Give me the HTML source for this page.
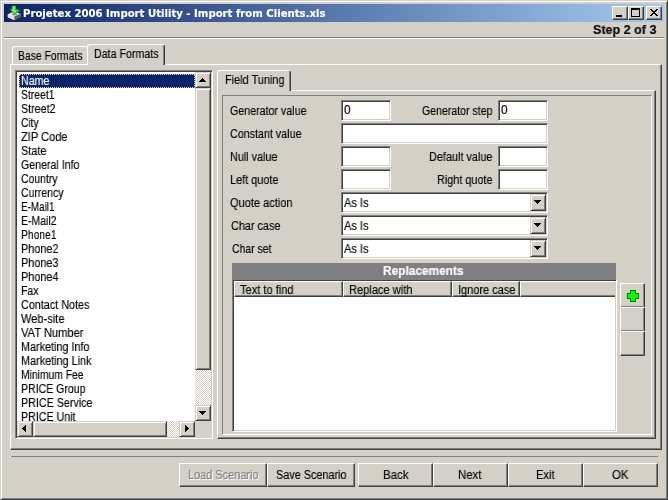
<!DOCTYPE html>
<html><head><meta charset="utf-8"><title>Projetex 2006 Import Utility</title>
<style>
*{box-sizing:border-box;margin:0;padding:0}
html,body{width:668px;height:500px;overflow:hidden;background:#d4d0c8}
body{font-family:"Liberation Sans",sans-serif;font-size:12px;color:#000;position:relative}
.a{position:absolute}
.t{position:absolute;white-space:nowrap;height:14px;line-height:14px;transform-origin:0 0;will-change:transform;-webkit-text-stroke:0.15px currentColor}
.b{font-weight:bold}
.w{color:#fff}
.sel{color:#fff}
.dis{color:#808080;text-shadow:1px 1px 0 #fff}
.ttl{color:#fff;font-weight:bold;font-size:11px;font-family:"DejaVu Sans Condensed","DejaVu Sans","Liberation Sans",sans-serif}
#win{left:0;top:0;width:668px;height:500px;border:1px solid;border-color:#d4d0c8 #404040 #404040 #d4d0c8;box-shadow:inset 1px 1px 0 #fff,inset -1px -1px 0 #808080}
#title{left:4px;top:4px;width:660px;height:18px;background:linear-gradient(to right,#0a246a,#a6caf0)}
.btn{position:absolute;background:#d4d0c8;border:1px solid;border-color:#fff #404040 #404040 #fff;box-shadow:inset -1px -1px 0 #808080}
.sb{position:absolute;background:#d4d0c8;border:1px solid;border-color:#d4d0c8 #404040 #404040 #d4d0c8;box-shadow:inset 1px 1px 0 #fff,inset -1px -1px 0 #808080}
.sunk{position:absolute;background:#fff;border:1px solid;border-color:#808080 #fff #fff #808080;box-shadow:inset 1px 1px 0 #404040,inset -1px -1px 0 #d4d0c8}
.page{position:absolute;border:1px solid;border-color:#fff #404040 #404040 #fff;box-shadow:inset -1px -1px 0 #808080}
.tab{position:absolute;background:#d4d0c8;border:1px solid;border-color:#fff #404040 #d4d0c8 #fff;border-bottom:0;box-shadow:inset -1px 0 0 #808080;border-radius:3px 3px 0 0}
.hl{position:absolute;height:2px;border-top:1px solid #808080;border-bottom:1px solid #fff}
.bev{position:absolute;border:1px solid;border-color:#808080 #fff #fff #808080}
.hc{position:absolute;top:281px;height:16px;background:#d4d0c8;border:1px solid;border-color:#fff #404040 #404040 #fff;box-shadow:inset -1px -1px 0 #808080}
.trk{position:absolute}
svg{position:absolute;overflow:visible}
</style></head><body>
<div id="win" class="a"></div>
<div id="title" class="a"></div>
<svg style="left:6px;top:5px" width="16" height="16" viewBox="0 0 16 16">
<path d="M1.8 9.3 L8 6.6 L14.4 8.8 L14.4 11.8 L8.2 14.9 L1.8 12.3 Z" fill="#f4f4f4"/>
<path d="M8.2 11.6 L14.4 8.8 L14.4 11.8 L8.2 14.9 Z" fill="#5e5c58"/>
<path d="M1.8 9.3 L8.2 11.6 L8.2 14.9 L1.8 12.3 Z" fill="#dedede"/>
<path d="M5 9.2 L8 8 L11.6 9.2 L8.4 10.7 Z" fill="#8f8f8f"/>
<path d="M5.9 0.8 L10 0.8 L10.1 4.3 L12.6 4.6 L13.4 6 L8.3 9.9 L3.6 3.6 L5.9 3.8 Z" fill="#27b927"/>
<path d="M6.6 1.2 L9 1.2 L9 5 L11.4 5.6 L8.3 8.2 L5.2 4.4 L6.6 4.6 Z" fill="#74ee6e"/>
<path d="M12.2 5 L13.4 5.2 L13.4 6.4 L12.2 6.4 Z" fill="#10e010"/>
</svg>
<div class="btn" style="left:612px;top:6px;width:16px;height:14px"></div>
<div class="btn" style="left:628px;top:6px;width:16px;height:14px"></div>
<div class="btn" style="left:646px;top:6px;width:16px;height:14px"></div>
<div class="a" style="left:616px;top:15px;width:6px;height:2px;background:#000"></div>
<div class="a" style="left:631px;top:8px;width:9px;height:9px;border:1px solid #000;border-top-width:2px"></div>
<svg style="left:650px;top:9px" width="8" height="7" viewBox="0 0 8 7" shape-rendering="crispEdges"><path d="M0 0h2v1h-2zM6 0h2v1h-2zM1 1h2v1h-2zM5 1h2v1h-2zM2 2h4v1h-4zM3 3h2v1h-2zM2 4h4v1h-4zM1 5h2v1h-2zM5 5h2v1h-2zM0 6h2v1h-2zM6 6h2v1h-2z" fill="#000"/></svg>
<div class="hl" style="left:4px;top:37px;width:660px"></div>
<div class="a" style="left:10px;top:456px;width:648px;height:1px;background:#808080;border-left:1px solid #fff"></div>
<div class="page" style="left:10px;top:64px;width:652px;height:386px"></div>
<div class="tab" style="left:12px;top:46px;width:76px;height:18px;box-shadow:none;border-right-color:#d4d0c8"></div>
<div class="tab" style="left:87px;top:44px;width:78px;height:21px"></div>
<div class="sunk" style="left:15px;top:70px;width:198px;height:369px"></div>
<div class="a" style="left:19px;top:74px;width:176px;height:14px;background:#0a246a;border:1px dotted #e8d48c"></div>
<div class="page" style="left:217px;top:90px;width:439px;height:349px"></div>
<div class="tab" style="left:217px;top:70px;width:74px;height:21px"></div>
<div class="bev" style="left:222px;top:95px;width:430px;height:340px"></div>
<div class="sunk" style="left:341px;top:100px;width:50px;height:21px"></div>
<div class="sunk" style="left:498px;top:100px;width:50px;height:21px"></div>
<div class="sunk" style="left:341px;top:123px;width:207px;height:21px"></div>
<div class="sunk" style="left:341px;top:146px;width:50px;height:21px"></div>
<div class="sunk" style="left:498px;top:146px;width:50px;height:21px"></div>
<div class="sunk" style="left:341px;top:169px;width:50px;height:21px"></div>
<div class="sunk" style="left:498px;top:169px;width:50px;height:21px"></div>
<div class="sunk" style="left:341px;top:192px;width:207px;height:21px"></div>
<div class="sunk" style="left:341px;top:215px;width:207px;height:21px"></div>
<div class="sunk" style="left:341px;top:238px;width:207px;height:21px"></div>
<div class="sb" style="left:530px;top:194px;width:16px;height:17px"></div>
<svg style="left:534px;top:200px" width="7" height="4" viewBox="0 0 7 4" shape-rendering="crispEdges"><path d="M0 0h7v1h-7zM1 1h5v1h-5zM2 2h3v1h-3zM3 3h1v1h-1z"/></svg>
<div class="sb" style="left:530px;top:217px;width:16px;height:17px"></div>
<svg style="left:534px;top:223px" width="7" height="4" viewBox="0 0 7 4" shape-rendering="crispEdges"><path d="M0 0h7v1h-7zM1 1h5v1h-5zM2 2h3v1h-3zM3 3h1v1h-1z"/></svg>
<div class="sb" style="left:530px;top:240px;width:16px;height:17px"></div>
<svg style="left:534px;top:246px" width="7" height="4" viewBox="0 0 7 4" shape-rendering="crispEdges"><path d="M0 0h7v1h-7zM1 1h5v1h-5zM2 2h3v1h-3zM3 3h1v1h-1z"/></svg>
<div class="a" style="left:232px;top:263px;width:384px;height:17px;background:#808080"></div>
<div class="sunk" style="left:232px;top:279px;width:385px;height:153px"></div>
<div class="hc" style="left:234px;width:109px"></div>
<div class="hc" style="left:343px;width:109px"></div>
<div class="hc" style="left:452px;width:68px"></div>
<div class="hc" style="left:520px;width:95px;border-right:0;box-shadow:inset 0 -1px 0 #808080"></div>
<div class="btn" style="left:620px;top:283px;width:25px;height:25px"></div>
<div class="btn" style="left:620px;top:307px;width:25px;height:25px"></div>
<div class="btn" style="left:620px;top:331px;width:25px;height:25px"></div>
<svg style="left:627px;top:290px" width="12" height="12" viewBox="0 0 12 12" shape-rendering="crispEdges"><path d="M3 0h6v3h3v6h-3v3h-6v-3h-3v-6h3z" fill="#008000"/><path d="M4 1h4v3h3v4h-3v3h-4v-3h-3v-4h3z" fill="#00ff00"/></svg>
<svg style="left:0;top:0" width="0" height="0"><defs><pattern id="ck" width="2" height="2" patternUnits="userSpaceOnUse"><rect width="2" height="2" fill="#d4d0c8"/><rect width="1" height="1" fill="#fff"/><rect x="1" y="1" width="1" height="1" fill="#fff"/></pattern></defs></svg>
<svg style="left:195px;top:370px" width="16" height="35" shape-rendering="crispEdges"><rect width="16" height="35" fill="url(#ck)"/></svg>
<svg style="left:167px;top:421px" width="12" height="16" shape-rendering="crispEdges"><rect width="12" height="16" fill="url(#ck)"/></svg>
<div class="a" style="left:195px;top:421px;width:16px;height:16px;background:#d4d0c8"></div>
<div class="sb" style="left:195px;top:72px;width:16px;height:16px"></div>
<div class="sb" style="left:195px;top:88px;width:16px;height:282px"></div>
<div class="sb" style="left:195px;top:405px;width:16px;height:16px"></div>
<div class="sb" style="left:17px;top:421px;width:16px;height:16px"></div>
<div class="sb" style="left:33px;top:421px;width:134px;height:16px"></div>
<div class="sb" style="left:179px;top:421px;width:16px;height:16px"></div>
<svg style="left:199px;top:78px" width="7" height="4" viewBox="0 0 7 4" shape-rendering="crispEdges"><path d="M3 0h1v1h-1zM2 1h3v1h-3zM1 2h5v1h-5zM0 3h7v1h-7z"/></svg>
<svg style="left:199px;top:411px" width="7" height="4" viewBox="0 0 7 4" shape-rendering="crispEdges"><path d="M0 0h7v1h-7zM1 1h5v1h-5zM2 2h3v1h-3zM3 3h1v1h-1z"/></svg>
<svg style="left:22px;top:425px" width="4" height="7" viewBox="0 0 4 7" shape-rendering="crispEdges"><path d="M3 0h1v7h-1zM2 1h1v5h-1zM1 2h1v3h-1zM0 3h1v1h-1z"/></svg>
<svg style="left:185px;top:425px" width="4" height="7" viewBox="0 0 4 7" shape-rendering="crispEdges"><path d="M0 0h1v7h-1zM1 1h1v5h-1zM2 2h1v3h-1zM3 3h1v1h-1z"/></svg>
<div class="btn" style="left:179px;top:463px;width:88px;height:24px"></div>
<div class="btn" style="left:267px;top:463px;width:88px;height:24px"></div>
<div class="btn" style="left:358px;top:463px;width:75px;height:24px"></div>
<div class="btn" style="left:433px;top:463px;width:75px;height:24px"></div>
<div class="btn" style="left:508px;top:463px;width:75px;height:24px"></div>
<div class="btn" style="left:583px;top:463px;width:75px;height:24px"></div>
<div class="t sel" style="left:21px;top:74px;transform:scaleX(0.8902);">Name</div>
<div class="t" style="left:21px;top:88px;transform:scaleX(0.8656);">Street1</div>
<div class="t" style="left:21px;top:102px;transform:scaleX(0.8914);">Street2</div>
<div class="t" style="left:21px;top:116px;transform:scaleX(0.8466);">City</div>
<div class="t" style="left:21px;top:130px;transform:scaleX(0.9211);">ZIP Code</div>
<div class="t" style="left:21px;top:144px;transform:scaleX(0.9097);">State</div>
<div class="t" style="left:21px;top:158px;transform:scaleX(0.8857);">General Info</div>
<div class="t" style="left:21px;top:172px;transform:scaleX(0.8684);">Country</div>
<div class="t" style="left:21px;top:186px;transform:scaleX(0.8729);">Currency</div>
<div class="t" style="left:21px;top:200px;transform:scaleX(0.8233);">E-Mail1</div>
<div class="t" style="left:21px;top:214px;transform:scaleX(0.8725);">E-Mail2</div>
<div class="t" style="left:21px;top:228px;transform:scaleX(0.8580);">Phone1</div>
<div class="t" style="left:21px;top:242px;transform:scaleX(0.9063);">Phone2</div>
<div class="t" style="left:21px;top:256px;transform:scaleX(0.9063);">Phone3</div>
<div class="t" style="left:21px;top:270px;transform:scaleX(0.9063);">Phone4</div>
<div class="t" style="left:21px;top:284px;transform:scaleX(0.8743);">Fax</div>
<div class="t" style="left:21px;top:298px;transform:scaleX(0.9008);">Contact Notes</div>
<div class="t" style="left:21px;top:312px;transform:scaleX(0.9228);">Web-site</div>
<div class="t" style="left:21px;top:326px;transform:scaleX(0.9279);">VAT Number</div>
<div class="t" style="left:21px;top:340px;transform:scaleX(0.9008);">Marketing Info</div>
<div class="t" style="left:21px;top:354px;transform:scaleX(0.9033);">Marketing Link</div>
<div class="t" style="left:21px;top:368px;transform:scaleX(0.8598);">Minimum Fee</div>
<div class="t" style="left:21px;top:382px;transform:scaleX(0.8792);">PRICE Group</div>
<div class="t" style="left:21px;top:396px;transform:scaleX(0.8934);">PRICE Service</div>
<div class="t" style="left:21px;top:410px;transform:scaleX(0.8882);">PRICE Unit</div>
<div class="t" style="left:18px;top:49px;transform:scaleX(0.8634);">Base Formats</div>
<div class="t" style="left:94px;top:47px;transform:scaleX(0.8874);">Data Formats</div>
<div class="t" style="left:225px;top:73px;transform:scaleX(0.9101);">Field Tuning</div>
<div class="t" style="left:230px;top:104px;transform:scaleX(0.8889);">Generator value</div>
<div class="t" style="left:230px;top:127px;transform:scaleX(0.8931);">Constant value</div>
<div class="t" style="left:230px;top:150px;transform:scaleX(0.9013);">Null value</div>
<div class="t" style="left:230px;top:173px;transform:scaleX(0.9084);">Left quote</div>
<div class="t" style="left:230px;top:196px;transform:scaleX(0.9185);">Quote action</div>
<div class="t" style="left:231px;top:219px;transform:scaleX(0.9049);">Char case</div>
<div class="t" style="left:232px;top:242px;transform:scaleX(0.8708);">Char set</div>
<div class="t" style="left:422px;top:104px;transform:scaleX(0.8807);">Generator step</div>
<div class="t" style="left:429px;top:150px;transform:scaleX(0.9065);">Default value</div>
<div class="t" style="left:437px;top:173px;transform:scaleX(0.9040);">Right quote</div>
<div class="t" style="left:344px;top:103px;transform:scaleX(0.9720);">0</div>
<div class="t" style="left:501px;top:103px;transform:scaleX(0.9720);">0</div>
<div class="t" style="left:344px;top:196px;transform:scaleX(0.9186);">As Is</div>
<div class="t" style="left:344px;top:219px;transform:scaleX(0.9186);">As Is</div>
<div class="t" style="left:344px;top:242px;transform:scaleX(0.9186);">As Is</div>
<div class="t" style="left:240px;top:283px;transform:scaleX(0.9219);">Text to find</div>
<div class="t" style="left:349px;top:283px;transform:scaleX(0.9243);">Replace with</div>
<div class="t" style="left:458px;top:283px;transform:scaleX(0.9168);">Ignore case</div>
<div class="t dis" style="left:188px;top:468px;transform:scaleX(0.9110);">Load Scenario</div>
<div class="t" style="left:276px;top:468px;transform:scaleX(0.9033);">Save Scenario</div>
<div class="t" style="left:383px;top:468px;transform:scaleX(0.9555);">Back</div>
<div class="t" style="left:458px;top:468px;transform:scaleX(0.9519);">Next</div>
<div class="t" style="left:536px;top:468px;transform:scaleX(0.9243);">Exit</div>
<div class="t" style="left:612px;top:468px;transform:scaleX(0.9514);">OK</div>
<div class="t b w" style="left:383px;top:264px;transform:scaleX(0.9892);">Replacements</div>
<div class="t b" style="left:593px;top:23px;transform:scaleX(0.9658);font-size:13px">Step 2 of 3</div>
<div class="t ttl" style="left:23px;top:7px;transform:scaleX(1.0224);">Projetex 2006 Import Utility - Import from Clients.xls</div>
</body></html>
